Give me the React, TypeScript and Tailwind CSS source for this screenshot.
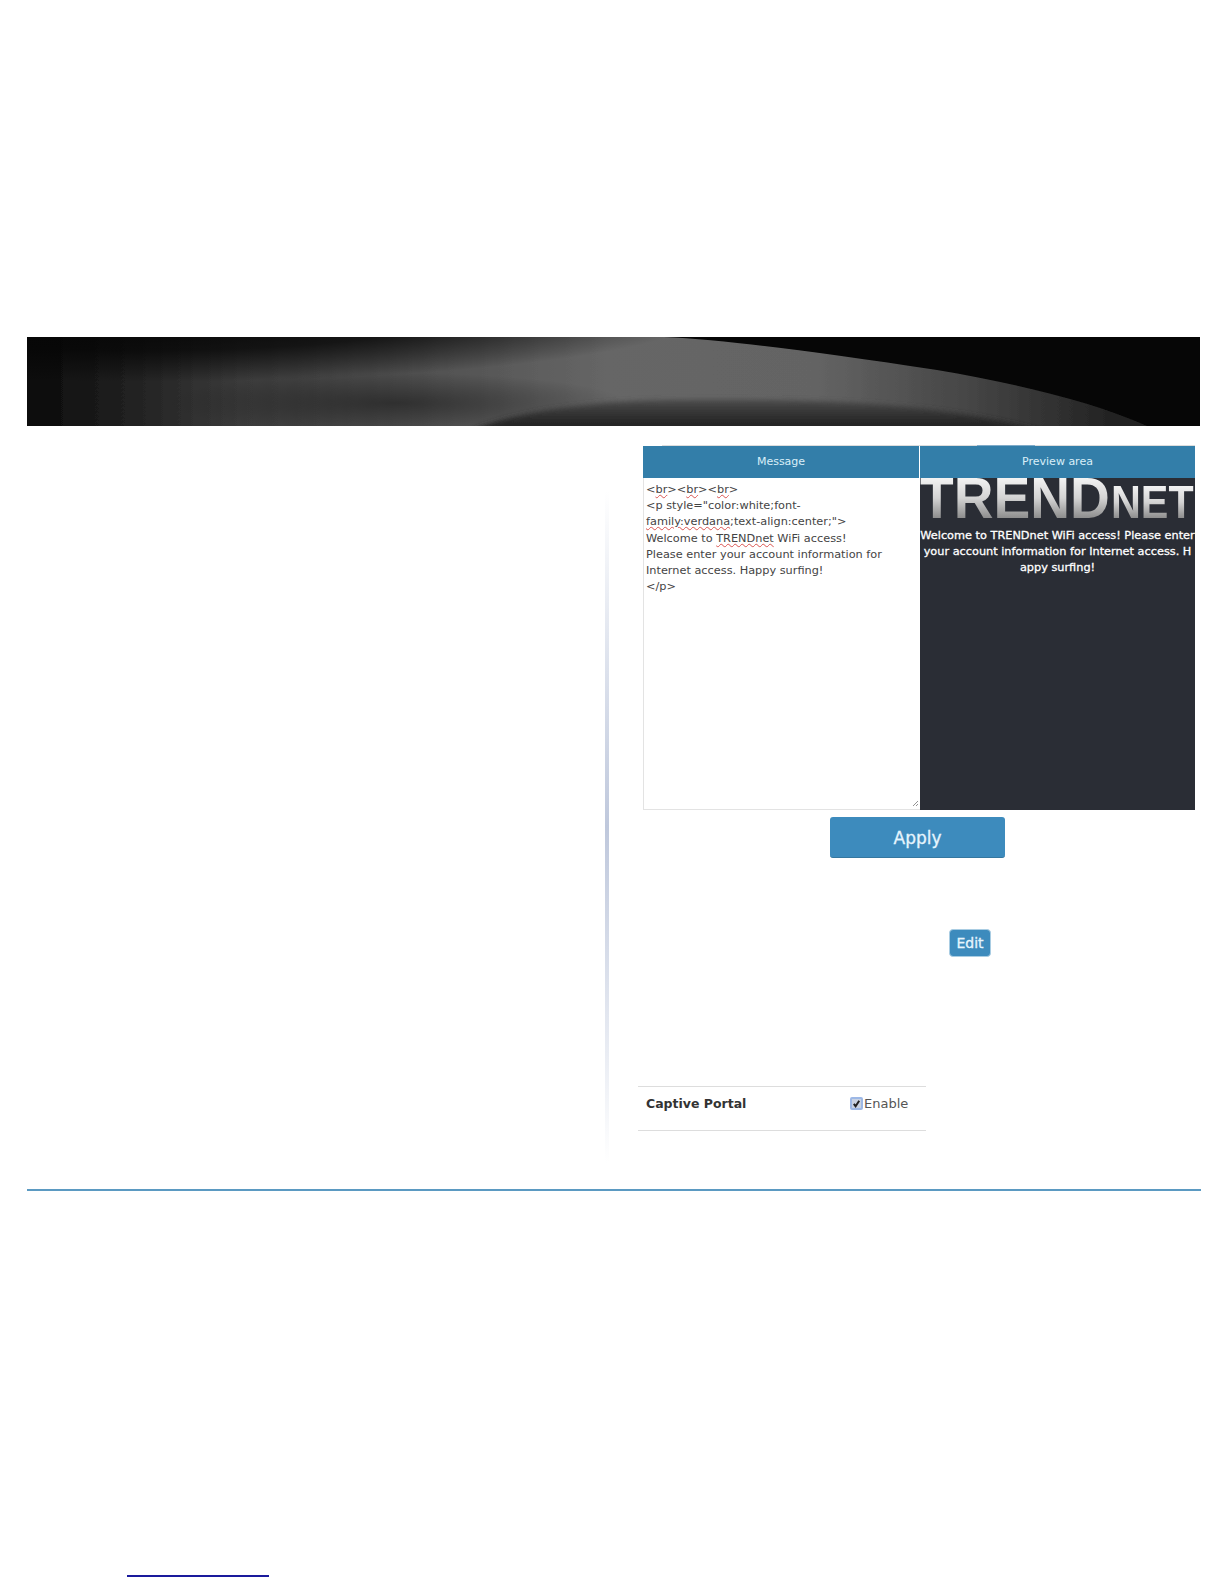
import { ReactNode } from "react";

function Squiggle({ children }: { children: ReactNode }) {
  return <span className="underline decoration-wavy decoration-[#d9534f] decoration-1 underline-offset-[1px]">{children}</span>;
}

function Banner() {
  return (
    <svg viewBox="0 0 1173 89" preserveAspectRatio="none" className="block h-full w-full">
      <defs>
        <linearGradient id="dome" x1="0" x2="1" y1="0" y2="0">
          <stop offset="0" stopColor="#050505" />
          <stop offset="0.08" stopColor="#1a1a1a" />
          <stop offset="0.2" stopColor="#3a3a3a" />
          <stop offset="0.36" stopColor="#505050" />
          <stop offset="0.52" stopColor="#666666" />
          <stop offset="0.7" stopColor="#646464" />
          <stop offset="0.84" stopColor="#444444" />
          <stop offset="0.96" stopColor="#222222" />
        </linearGradient>
        <linearGradient id="arch" x1="0" x2="0" y1="0" y2="1">
          <stop offset="0" stopColor="#4c4c4c" />
          <stop offset="0.6" stopColor="#2a2a2a" />
          <stop offset="1" stopColor="#252525" />
        </linearGradient>
        <radialGradient id="fade">
          <stop offset="0" stopColor="#050505" stopOpacity="1" />
          <stop offset="0.55" stopColor="#050505" stopOpacity="0.75" />
          <stop offset="1" stopColor="#050505" stopOpacity="0" />
        </radialGradient>
        <radialGradient id="band">
          <stop offset="0" stopColor="#181818" stopOpacity="0.55" />
          <stop offset="1" stopColor="#181818" stopOpacity="0" />
        </radialGradient>
        <filter id="softer" x="-10%" y="-50%" width="120%" height="200%"><feGaussianBlur stdDeviation="2.5" /></filter>
        <filter id="edge" x="-2%" y="-5%" width="104%" height="110%"><feGaussianBlur stdDeviation="0.6" /></filter>
      </defs>
      <rect width="1173" height="89" fill="#060606" />
      <path d="M-20 95 L-20 -5 L630 -5 L637 0 C700 3 790 15 910 33 C985 46 1070 64 1133 95 Z" fill="url(#dome)" filter="url(#edge)" />
      <ellipse cx="120" cy="-25" rx="560" ry="70" fill="url(#fade)" />
      <ellipse cx="370" cy="66" rx="230" ry="30" fill="url(#band)" />
      <path d="M441 95 C480 76 560 64 640 63 C720 62 800 63 860 68 C930 74 980 84 1020 95 Z" fill="url(#arch)" filter="url(#softer)" />
    </svg>
  );
}

function LogoPart({ width, className, children }: { width: string; className: string; children: ReactNode }) {
  return (
    <div className={width}>
      <span className={`inline-block origin-left bg-gradient-to-b from-[#f4f4f4] via-[#d4d4d4] to-[#8a8a8a] bg-clip-text font-bold text-transparent [font-family:'Liberation_Sans',sans-serif] ${className}`}>
        {children}
      </span>
    </div>
  );
}

export default function App() {
  return (
    <div className="flex h-[1584px] w-[1224px] flex-col overflow-hidden bg-white font-['DejaVu_Sans',sans-serif]">
      <div className="mt-[337px] ml-[27px] h-[89px] w-[1173px] shrink-0">
        <Banner />
      </div>

      <div className="flex h-[763px] shrink-0">
        <div className="ml-[605px] mt-[65px] h-[672px] w-[4px] bg-gradient-to-b from-white via-[#bfc8dc] to-white" />

        <div className="ml-[29px] flex w-[557px] flex-col pt-[19px]">
          <div className="ml-[24px] h-[1px] w-[533px] bg-[#dddddd]">
            <div className="ml-[315px] h-[1px] w-[58px] bg-[#7fabc9]" />
          </div>
          <div className="ml-[5px] flex h-[32px] w-[552px] bg-[#337ea9] text-[11px] text-[#d9eef8]">
            <div className="flex w-[277px] items-center justify-center border-r border-white">Message</div>
            <div className="flex flex-1 items-center justify-center">Preview area</div>
          </div>
          <div className="ml-[5px] flex h-[332px] w-[552px]">
            <div className="relative w-[277px] border-b border-l border-[#e3e3e3] pt-[4px] pl-[2px] text-[11.3px] leading-[16.2px] text-[#444444]">
              <div>&lt;<Squiggle>br</Squiggle>&gt;&lt;<Squiggle>br</Squiggle>&gt;&lt;<Squiggle>br</Squiggle>&gt;</div>
              <div>&lt;p style="color:white;font-</div>
              <div><Squiggle>family:verdana</Squiggle>;text-align:center;"&gt;</div>
              <div>Welcome to <Squiggle>TRENDnet</Squiggle> WiFi access!</div>
              <div>Please enter your account information for</div>
              <div>Internet access. Happy surfing!</div>
              <div>&lt;/p&gt;</div>
              <svg viewBox="0 0 7 7" className="absolute right-[1px] bottom-[2px] h-[7px] w-[7px]">
                <path d="M1 6 6 1M4 6 6 4" stroke="#777777" strokeWidth="0.8" />
              </svg>
            </div>
            <div className="flex-1 bg-[#2a2d35] text-center text-[11.3px] leading-[16.2px] whitespace-nowrap text-white [-webkit-text-stroke:0.3px_white]">
              <div className="flex h-[45px] items-end [-webkit-text-stroke:0]">
                <LogoPart width="w-[191px]" className="scale-x-[0.95] text-[58px] leading-[42px]">TREND</LogoPart>
                <LogoPart width="w-[84px]" className="scale-x-[0.88] text-[47px] leading-[34px]">NET</LogoPart>
              </div>
              <div className="mt-[5px]">
                <div>Welcome to TRENDnet WiFi access! Please enter</div>
                <div>your account information for Internet access. H</div>
                <div>appy surfing!</div>
              </div>
            </div>
          </div>
          <button className="mt-[7px] ml-[192px] h-[41px] w-[175px] rounded-[3px] border-b border-[#35779f] bg-[#3d8bbd] pt-[3px] text-[17px] text-[#e6f5fd] [-webkit-text-stroke:0.3px_#e6f5fd]">
            Apply
          </button>
          <button className="mt-[71px] ml-[311px] h-[28px] w-[42px] rounded-[4px] border border-[#a9cde3] bg-[#3d8bbd] text-[14px] text-[#e6f5fd] [-webkit-text-stroke:0.3px_#e6f5fd]">
            Edit
          </button>
          <div className="mt-[129px] flex h-[45px] w-[288px] items-center border-y border-[#dddddd] pb-[10px] text-[12.5px] text-[#333333]">
            <span className="ml-[8px] w-[204px] pt-[1px] font-bold">Captive Portal</span>
            <span className="flex h-[13px] w-[13px] items-center justify-center rounded-[2px] border-2 border-[#9db8e6] bg-[#c9d2e2]">
              <svg viewBox="0 0 10 10" className="h-[9px] w-[9px] shrink-0">
                <path d="M2 5.5 4 8 8 2" fill="none" stroke="#222222" strokeWidth="2.2" />
              </svg>
            </span>
            <span className="ml-[1px] text-[13px] text-[#555555]">Enable</span>
          </div>
        </div>
      </div>

      <div className="ml-[27px] h-[2px] w-[1174px] shrink-0 bg-[#5b9ac2]" />
      <div className="mt-[384px] ml-[127px] h-[2px] w-[142px] shrink-0 bg-[#1a1a9c]" />
    </div>
  );
}
